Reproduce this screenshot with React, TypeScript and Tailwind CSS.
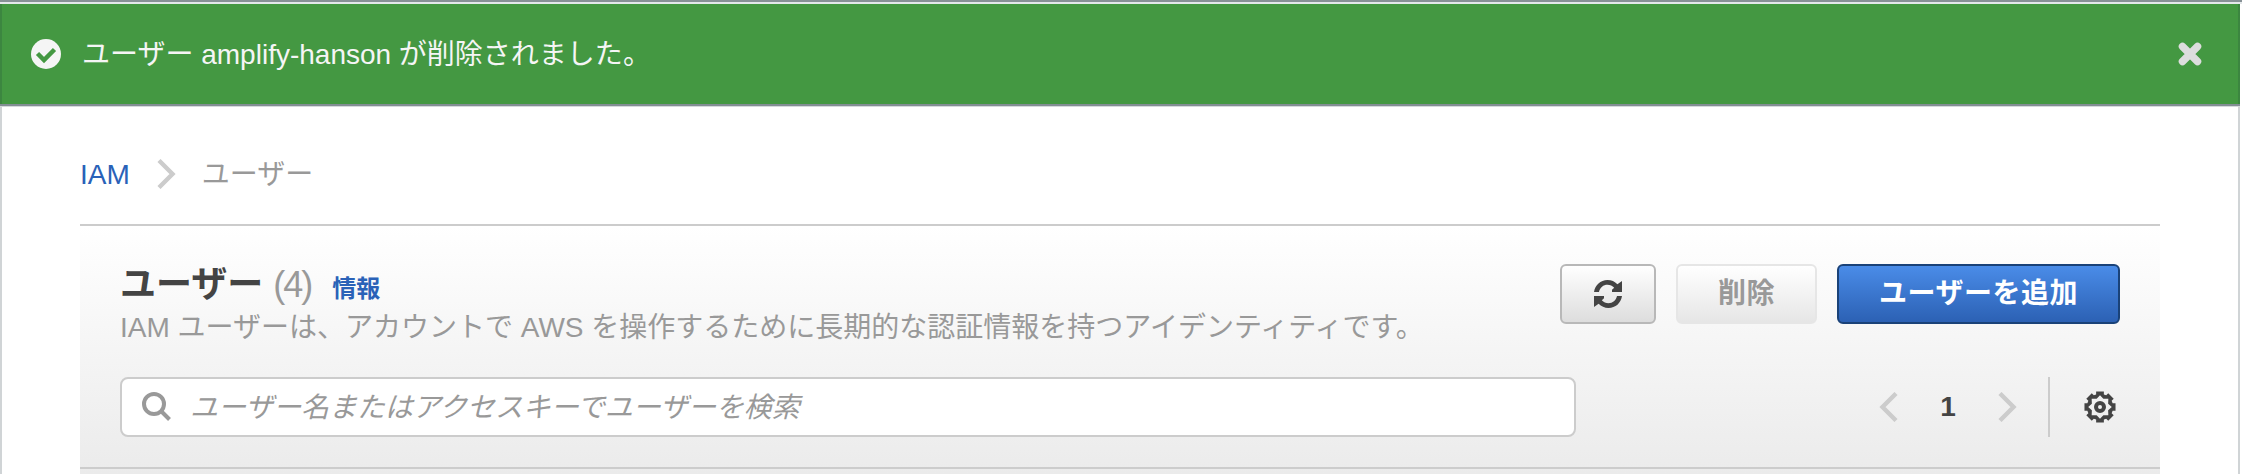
import React from 'react';

const arrow =
  'M0 12C1 5 6.500 0 13.500 0C17.500 0 20.800 1.500 23.400 4.200L28 1V12H18V9.800L20.200 7.800C18.500 6 16 4.800 13.500 4.800C9.300 4.800 6 7.500 5 12Z';

function RefreshIcon() {
  return (
    <svg className="h-[28px] w-[28px]" viewBox="0 0 28 28" fill="#444">
      <path d={arrow} />
      <path d={arrow} transform="rotate(180 14 14)" />
    </svg>
  );
}

function Chevron({ left = false }: { left?: boolean }) {
  return (
    <svg
      className={left ? 'h-[30px] w-[19px] -scale-x-100' : 'h-[30px] w-[19px]'}
      viewBox="0 0 19 30"
      fill="none"
      stroke="#ccc"
      strokeWidth="4.400"
    >
      <path d="M2 1.500L15.500 15L2 28.500" />
    </svg>
  );
}

function polar(radius: number, degrees: number) {
  const a = (degrees * Math.PI) / 180;
  return `${(16 + radius * Math.cos(a)).toFixed(2)} ${(16 + radius * Math.sin(a)).toFixed(2)}`;
}

const teeth = [0, 45, 90, 135, 180, 225, 270, 315];
const outer = teeth.flatMap((t) => [polar(13.2, t - 17), polar(16, t - 14), polar(16, t + 14), polar(13.2, t + 17)]);
const inner = teeth.flatMap((t) => [polar(11.8, t), polar(8.8, t + 22.5)]);

function GearIcon() {
  return (
    <svg className="h-8 w-8" viewBox="0 0 32 32">
      <path fill="#444" fillRule="evenodd" d={`M${outer.join('L')}ZM${inner.join('L')}Z`} />
      <circle cx="16" cy="16" r="4" fill="none" stroke="#444" strokeWidth="4" />
    </svg>
  );
}

export default function App() {
  return (
    <div className="flex h-[474px] w-[2242px] flex-col overflow-hidden bg-white text-[28px] leading-[44px] text-[#999] [font-family:'Liberation_Sans','Noto_Sans_CJK_JP',sans-serif]">
      <div className="h-[2px] bg-[#879196]" />
      <div className="h-[2px] bg-[#e4e8ea]" />
      <div className="flex h-[470px] w-[2240px] flex-col border-x-2 border-[#d0d4d6]">
        <div className="-mx-0.5 flex h-[100px] shrink-0 items-center border-x-2 border-[#3c8640] bg-[#449842] pr-[36px] pl-[29px] text-[#f5f5f5]">
          <svg className="h-[30px] w-[30px]" viewBox="0 0 30 30">
            <circle cx="15" cy="15" r="15" fill="#f5f5f5" />
            <path d="M6.500 14.500L13 21L23.500 10.500" fill="none" stroke="#449842" strokeWidth="4.500" />
          </svg>
          <p className="mt-px ml-[21px] whitespace-nowrap">ユーザー amplify-hanson が削除されました。</p>
          <svg className="ml-auto h-6 w-6" viewBox="0 0 24 24" stroke="#ddd" strokeWidth="7.500" strokeLinecap="round">
            <path d="M4.500 4.500L19.500 19.500M19.500 4.500L4.500 19.500" />
          </svg>
        </div>
        <div className="-mx-0.5 h-[2px] shrink-0 bg-[#838e94]" />
        <div className="-mx-0.5 h-[1px] shrink-0 bg-[#d5d9db]" />

        <nav className="mx-[78px] flex h-[117px] shrink-0 items-center pt-[17px]">
          <a className="mt-px text-[#2a62b8]">IAM</a>
          <span className="ml-[27px]">
            <Chevron />
          </span>
          <span className="mt-px ml-[26px]">ユーザー</span>
        </nav>

        <section className="mx-[78px] flex h-[250px] shrink-0 flex-col border-t-2 border-[#ccc] bg-linear-to-b from-white to-[#ebebeb]">
          <div className="flex h-[243px] shrink-0 flex-col border-b-2 border-[#ccc] px-10 pt-9">
            <div className="flex h-[115px] items-start justify-between">
              <div>
                <div className="flex h-[44px] items-baseline pt-px leading-[44px]">
                  <h1 className="text-[36px] font-bold text-[#444]">ユーザー</h1>
                  <span className="ml-[10px] text-[36px] tracking-[-2px]">(4)</span>
                  <a className="ml-[21px] text-[24px] font-bold text-[#2a62b8]">情報</a>
                </div>
                <p className="whitespace-nowrap">
                  IAM ユーザーは、アカウントで AWS を操作するために長期的な認証情報を持つアイデンティティです。
                </p>
              </div>
              <div className="flex gap-5 pt-0.5 font-bold tracking-[0.5px]">
                <button className="flex h-[60px] w-24 items-center justify-center rounded-[6px] border-2 border-[#b8b8b8] bg-linear-to-b from-white to-[#ddd]">
                  <RefreshIcon />
                </button>
                <button className="flex h-[60px] items-center rounded-[6px] border-2 border-[#e6e6e6] bg-linear-to-b from-white to-[#e6e6e6] px-10 text-[#999]">
                  削除
                </button>
                <button className="flex h-[60px] items-center rounded-[6px] border-2 border-[#1a4278] bg-linear-to-b from-[#4a8ce8] to-[#2c61b4] px-10 text-white">
                  ユーザーを追加
                </button>
              </div>
            </div>
            <div className="flex items-center">
              <div className="flex h-[60px] w-[1456px] items-center rounded-[8px] border-2 border-[#ccc] bg-white pl-5">
                <svg className="h-[30px] w-[30px]" viewBox="0 0 30 30" fill="none" stroke="#999">
                  <circle cx="12" cy="12" r="10" strokeWidth="4" />
                  <path d="M19 19L27.500 27.500" strokeWidth="4" />
                </svg>
                <span className="mt-px ml-[18px] tracking-[-0.1px] italic">
                  ユーザー名またはアクセスキーでユーザーを検索
                </span>
              </div>
              <div className="ml-auto flex h-[60px] items-center">
                <Chevron left />
                <span className="w-[100px] text-center font-bold text-[#444]">1</span>
                <Chevron />
                <span className="ml-[31px] h-[60px] w-[2px] bg-[#ccc]" />
                <span className="mr-1 ml-[34px]">
                  <GearIcon />
                </span>
              </div>
            </div>
          </div>
        </section>
      </div>
    </div>
  );
}
